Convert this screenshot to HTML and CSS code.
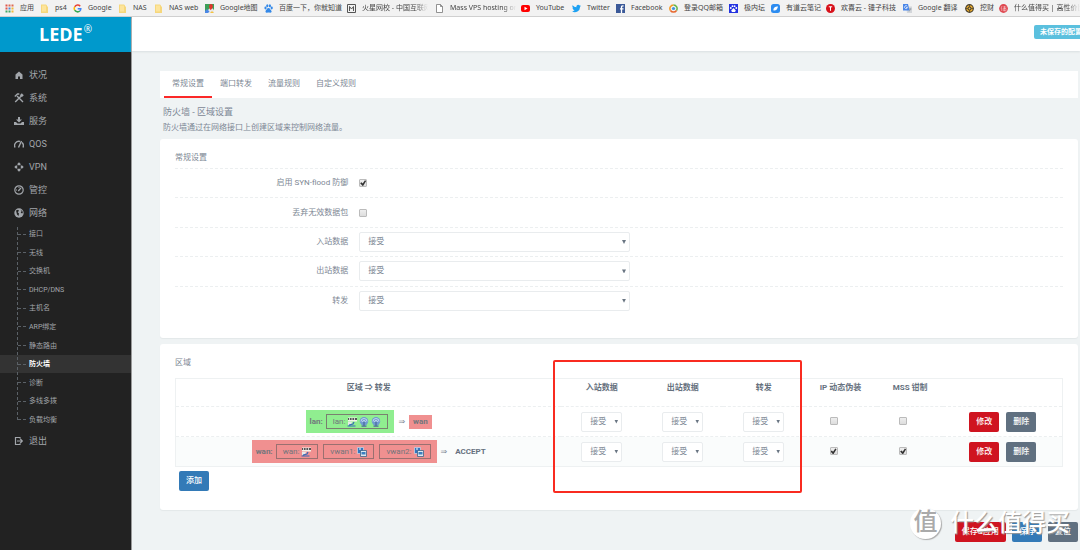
FILE: index.html
```html
<!DOCTYPE html>
<html lang="zh-CN">
<head>
<meta charset="utf-8">
<title>LEDE - 防火墙</title>
<link rel="stylesheet" href="styles.css">
</head>
<body>
<svg width="0" height="0" class="defs" aria-hidden="true">
  <symbol id="i-folder" viewBox="0 0 9 9"><path d="M1 .5h5l1 1v1h1V9H1z" fill="#f6d77c"/><path d="M2 1.5h4v6H2z" fill="#fde49b"/></symbol>
  <symbol id="i-switch" viewBox="0 0 10 10"><path d="M1 .5h9v4H1z" fill="#f3f3ea"/><path d="M1 1h9v2H1z" fill="#555"/><path d="M2.5 1v2M5 1v2M7.500 1v2" stroke="#eee" stroke-width=".8"/><path d="M1 5h4l-1 3H1z" fill="#e8e8e8"/><path d="M2 8l4-1 1-2M.5 9h8" stroke="#3568b8" fill="none" stroke-width="1.200"/></symbol>
  <symbol id="i-wifi" viewBox="0 0 10 10"><circle cx="5" cy="4.200" r="4.200" fill="#6f9bd0"/><path d="M2 4.500a3 3 0 0 1 6 0M3.500 5a1.500 1.500 0 0 1 3 0" stroke="#e7f1fb" fill="none" stroke-width=".7"/><path d="M5 5v4M2.500 9.200h5" stroke="#4a6a98" stroke-width="1.200"/></symbol>
  <symbol id="i-vlan" viewBox="0 0 10 10"><path d="M.5.5h6v6h-6z" fill="#3276bd" stroke="#dbe8f4" stroke-width=".6"/><path d="M3.500 3.500h6v6h-6z" fill="#dce8f0" stroke="#3d6388" stroke-width=".8"/><path d="M4.500 5h4v2.500h-4z" fill="#3c7fbf"/><path d="M2 2h2" stroke="#fff"/></symbol>
</svg>

<nav class="bookmarks" aria-label="书签">
  <a href="#"><svg viewBox="0 0 9 9"><path d="M.5.5h2v2h-2zM.5 3.500h2v2h-2z" fill="#e0564b"/><path d="M3.500.5h2v2h-2zM6.500.5h2v2h-2z" fill="#dd6b52"/><path d="M3.500 3.500h2v2h-2z" fill="#4c8bd8"/><path d="M.5 6.500h2v2h-2zM3.500 6.500h2v2h-2z" fill="#42a866"/><path d="M6.500 3.500h2v2h-2zM6.500 6.500h2v2h-2z" fill="#efbc3c"/></svg><span>应用</span></a>
  <a href="#"><svg><use href="#i-folder"/></svg><span>ps4</span></a>
  <a href="#"><svg viewBox="0 0 9 9" fill="none" stroke-width="1.500"><path d="M7.200 2.200A3.300 3.300 0 0 0 1.700 2.800" stroke="#ea4335"/><path d="M1.700 2.800a3.300 3.300 0 0 0 0 3.400" stroke="#fbbc05"/><path d="M1.700 6.200A3.300 3.300 0 0 0 6.800 7" stroke="#34a853"/><path d="M6.800 7A3.300 3.300 0 0 0 7.800 4.700H4.700" stroke="#4285f4"/></svg><span>Google</span></a>
  <a href="#"><svg><use href="#i-folder"/></svg><span>NAS</span></a>
  <a href="#"><svg><use href="#i-folder"/></svg><span>NAS web</span></a>
  <a href="#"><svg viewBox="0 0 9 9"><path d="M0 0h9v9H0z" fill="#3d9f58"/><path d="M0 9l6-6 3 3v3z" fill="#e8e8e8"/><path d="M0 0h3v4L0 7z" fill="#3d9f58"/><path d="M0 9V7l2-2 2.500 2.500L3 9z" fill="#4b87e6"/><path d="M5 9l2-2 2 2z" fill="#f5c342"/><path d="M5.500 6C3.500 4 3.500 0 6 0s2.500 4-.5 6" fill="#e0382d"/></svg><span>Google地图</span></a>
  <a href="#"><svg viewBox="0 0 9 9" fill="#3388e8"><ellipse cx="1.500" cy="4" rx="1.100" ry="1.400"/><ellipse cx="3.300" cy="1.800" rx="1.100" ry="1.500"/><ellipse cx="5.900" cy="1.800" rx="1.100" ry="1.500"/><ellipse cx="7.700" cy="4" rx="1.100" ry="1.400"/><path d="M4.500 4C3 4 3 5.500 2 6.200S1.500 9 3 8.700s2-.3 3 0 2.500-1 1-2.500S6 4 4.500 4"/></svg><span>百度一下，你就知道</span></a>
  <a href="#"><svg viewBox="0 0 9 9" fill="none" stroke="#555"><path d="M.5.5h8v8h-8z"/><path d="M2.500 7V2.500l2 2.500 2-2.500V7"/></svg><span class="fade">火星网校 - 中国互联网</span></a>
  <a href="#"><svg viewBox="0 0 9 9" fill="#fff" stroke="#777" stroke-width=".8"><path d="M1.500.5h4l2 2v6h-6zM5.500.5v2h2"/></svg><span class="fade">Mass VPS hosting on</span></a>
  <a href="#"><svg viewBox="0 0 9 9"><rect y="1" width="9" height="7" rx="2" fill="#f00"/><path d="M3.500 2.800v3.400l3-1.700z" fill="#fff"/></svg><span>YouTube</span></a>
  <a href="#"><svg viewBox="0 0 24 24" fill="#1da1f2"><path d="M24 4.600a10 10 0 0 1-2.800.8 5 5 0 0 0 2.100-2.700 10 10 0 0 1-3.100 1.200 4.900 4.900 0 0 0-8.400 4.500A14 14 0 0 1 1.700 3.200a4.900 4.900 0 0 0 1.500 6.500 5 5 0 0 1-2.200-.6 4.900 4.900 0 0 0 3.900 4.900 5 5 0 0 1-2.200.1 4.900 4.900 0 0 0 4.600 3.400A10 10 0 0 1 0 19.500 14 14 0 0 0 21.500 7a10 10 0 0 0 2.500-2.400"/></svg><span>Twitter</span></a>
  <a href="#"><svg viewBox="0 0 9 9"><path d="M0 0h9v9H0z" fill="#3b5998"/><path d="M5.500 9V3q0-1.300 2-1M4 4.800h3.500" stroke="#fff" fill="none" stroke-width="1.300"/></svg><span>Facebook</span></a>
  <a href="#"><svg viewBox="0 0 9 9" fill="none" stroke-width="1.500"><path d="M1.500 6.500A3.600 3.600 0 0 1 4.500.9" stroke="#f49a25"/><path d="M4.500.9a3.600 3.600 0 0 1 3 5.600" stroke="#65b64a"/><path d="M7.500 6.500a3.600 3.600 0 0 1-6 0" stroke="#e8662d"/><circle cx="4.500" cy="4.500" r="1.600" fill="#3c94de"/></svg><span>登录QQ邮箱</span></a>
  <a href="#"><svg viewBox="0 0 9 9"><path d="M0 0h9v9H0z" fill="#2433e0"/><g fill="#fff"><circle cx="1.800" cy="4" r=".9"/><circle cx="3.500" cy="2.200" r=".9"/><circle cx="5.600" cy="2.200" r=".9"/><circle cx="7.300" cy="4" r=".9"/><path d="M4.500 4L2.200 6.500 3 8h3l.8-1.500z"/></g></svg><span>极内坛</span></a>
  <a href="#"><svg viewBox="0 0 9 9"><rect width="9" height="9" rx="2.500" fill="#2d8cf0"/><path d="M2.500 6.500C2 4 4 2.500 7 2.500 6.500 5 5 7 2.500 6.500" fill="#fff"/></svg><span>有道云笔记</span></a>
  <a href="#"><svg viewBox="0 0 9 9"><circle cx="4.500" cy="4.500" r="4.500" fill="#d7111b"/><path d="M2.800 2.800h3.400M4.500 2.800v4" stroke="#fff"/></svg><span>欢喜云 - 锤子科技</span></a>
  <a href="#"><svg viewBox="0 0 9 9"><path d="M3 2.500h6V9H4z" fill="#d3d6da"/><path d="M0 0h5l1.500 6.500H0z" fill="#4a86e8"/><path d="M4.300 2.300a1.500 1.500 0 1 0 .2 1.200H3" stroke="#fff" fill="none" stroke-width=".7"/><path d="M6 5h2.500M7.300 4.500Q7.500 6 6 7.500" stroke="#7b8794" fill="none" stroke-width=".6"/></svg><span>Google 翻译</span></a>
  <a href="#"><svg viewBox="0 0 9 9"><circle cx="4.500" cy="4.500" r="4.400" fill="#49402d"/><circle cx="4.500" cy="4.500" r="2.600" fill="none" stroke="#e9aa2d" stroke-width="1.300"/><path d="M4.500 1v7M1 4.500h7" stroke="#49402d" stroke-width=".7"/><circle cx="4.500" cy="4.500" r="1" fill="#f2bb42"/></svg><span>挖财</span></a>
  <a href="#"><svg viewBox="0 0 9 9"><circle cx="4.500" cy="4.500" r="4.400" fill="#df4850"/><path d="M3 2L2 4.500M2.700 4v3M4 3h3.500M5.500 2v5M4.300 4.500H7v2.300H4.300z" stroke="#fff" fill="none" stroke-width=".4"/></svg><span class="fade">什么值得买 | 高性价比</span></a>
</nav>

<div class="app">
  <aside class="sidebar">
    <a class="brand" href="#">LEDE<sup>®</sup></a>
    <nav class="menu" aria-label="主菜单">
      <a href="#"><svg viewBox="0 0 10 10"><path d="M5 1.500L1.500 4.500V9h2.500V6.500h2V9h2.500V4.500z"/></svg>状况</a>
      <a href="#"><svg viewBox="0 0 10 10" fill="none" stroke="currentColor" stroke-width="1.400"><path d="M1.200 9L7 3.200M3 3L9 9M.8 3.500L3.500 1h1.800"/><path d="M8.300.8L6.800 2.200l1 1L9.300 1.800"/></svg>系统</a>
      <a href="#"><svg viewBox="0 0 10 10"><path d="M4 1h2v2.500h2L5 6.500l-3-3h2zM0 6h2l1.500 1.500h3L8 6h2v3H0z"/></svg>服务</a>
      <a href="#"><svg viewBox="0 0 10 10" fill="none" stroke="currentColor" stroke-width="1.400"><path d="M1 8.500a4.300 4.300 0 0 1 5-6M8 3.600a4.300 4.300 0 0 1 1 4.900M4.500 8.500L7.500 2"/></svg>QOS</a>
      <a href="#"><svg viewBox="0 0 10 10"><path d="M5 .3l1.500 1.500v1.400h-3V1.800zM5 9.700l1.500-1.500V6.800h-3v1.400zM.3 5l1.500-1.500h1.400v3H1.800zM9.700 5L8.200 3.500H6.800v3h1.400z"/></svg>VPN</a>
      <a href="#"><svg viewBox="0 0 10 10" fill="none" stroke="currentColor" stroke-width="1.200"><circle cx="5" cy="5" r="4.200"/><path d="M4.300 6L7 2.800M2.300 5H3M5 2.300V3" stroke-width="1.300"/></svg>管控</a>
      <a href="#"><svg viewBox="0 0 10 10"><circle cx="5" cy="5" r="4.700"/><path d="M2 2.500l2-.8 1 1-1.300 1.600L5 5.500 4.500 8 3 6.500zM6.500 1.500l1 2-.8 1.200 1.500.8.8-1.500z" fill="#222"/></svg>网络</a>
      <ul class="submenu">
        <li><a href="#">接口</a></li>
        <li><a href="#">无线</a></li>
        <li><a href="#">交换机</a></li>
        <li><a href="#">DHCP/DNS</a></li>
        <li><a href="#">主机名</a></li>
        <li><a href="#">ARP绑定</a></li>
        <li><a href="#">静态路由</a></li>
        <li class="active"><a href="#" aria-current="page">防火墙</a></li>
        <li><a href="#">诊断</a></li>
        <li><a href="#">多线多拨</a></li>
        <li><a href="#">负载均衡</a></li>
      </ul>
      <a href="#"><svg viewBox="0 0 10 10" fill="none" stroke="currentColor" stroke-width="1.200"><path d="M6 2.500V1.500H1.500v7H6V7.500M3 5h5M6.300 3L8.300 5l-2 2"/></svg>退出</a>
    </nav>
  </aside>

  <div class="page">
    <header class="topbar"><a class="unsaved" href="#">未保存的配置</a></header>
    <main class="content">
      <nav class="tabs" aria-label="防火墙">
        <a class="current" href="#">常规设置</a>
        <a href="#">端口转发</a>
        <a href="#">流量规则</a>
        <a href="#">自定义规则</a>
      </nav>
      <div class="intro">
        <h1>防火墙 - 区域设置</h1>
        <p>防火墙通过在网络接口上创建区域来控制网络流量。</p>
      </div>

      <section class="card general">
        <h2>常规设置</h2>
        <div class="fields">
          <div class="field"><label for="syn">启用 SYN-flood 防御</label><input type="checkbox" id="syn" checked></div>
          <div class="field"><label for="drop">丢弃无效数据包</label><input type="checkbox" id="drop"></div>
          <div class="field"><label for="in">入站数据</label><span class="select"><select id="in"><option>接受</option></select></span></div>
          <div class="field"><label for="out">出站数据</label><span class="select"><select id="out"><option>接受</option></select></span></div>
          <div class="field"><label for="fwd">转发</label><span class="select"><select id="fwd"><option>接受</option></select></span></div>
        </div>
      </section>

      <section class="card zones">
        <h2>区域</h2>
        <table>
          <colgroup><col class="c-zone"><col class="c-policy"><col class="c-policy"><col class="c-policy"><col class="c-masq"><col class="c-mss"><col></colgroup>
          <thead>
            <tr><th>区域 ⇒ 转发</th><th>入站数据</th><th>出站数据</th><th>转发</th><th>IP 动态伪装</th><th>MSS 钳制</th><th></th></tr>
          </thead>
          <tbody>
            <tr>
              <td><div class="route"><span class="zone lan"><b>lan:</b><span class="net">lan: <svg><use href="#i-switch"/></svg><svg><use href="#i-wifi"/></svg><svg><use href="#i-wifi"/></svg></span></span><span class="arrow">⇒</span><b class="dest">wan</b></div></td>
              <td><span class="select small"><select aria-label="lan 入站数据"><option>接受</option></select></span></td>
              <td><span class="select small"><select aria-label="lan 出站数据"><option>接受</option></select></span></td>
              <td><span class="select small"><select aria-label="lan 转发"><option>接受</option></select></span></td>
              <td class="check"><input type="checkbox" aria-label="lan IP 动态伪装"></td>
              <td class="check"><input type="checkbox" aria-label="lan MSS 钳制"></td>
              <td><div class="actions"><button class="btn red">修改</button><button class="btn slate">删除</button></div></td>
            </tr>
            <tr>
              <td><div class="route"><span class="zone wan"><b>wan:</b><span class="net">wan: <svg><use href="#i-switch"/></svg></span><span class="net">vwan1: <svg><use href="#i-vlan"/></svg></span><span class="net">vwan2: <svg><use href="#i-vlan"/></svg></span></span><span class="arrow">⇒</span><b class="accept">ACCEPT</b></div></td>
              <td><span class="select small"><select aria-label="wan 入站数据"><option>接受</option></select></span></td>
              <td><span class="select small"><select aria-label="wan 出站数据"><option>接受</option></select></span></td>
              <td><span class="select small"><select aria-label="wan 转发"><option>接受</option></select></span></td>
              <td class="check"><input type="checkbox" aria-label="wan IP 动态伪装" checked></td>
              <td class="check"><input type="checkbox" aria-label="wan MSS 钳制" checked></td>
              <td><div class="actions"><button class="btn red">修改</button><button class="btn slate">删除</button></div></td>
            </tr>
          </tbody>
        </table>
        <button class="btn blue add">添加</button>
        <div class="highlight"></div>
      </section>

      <div class="footer-actions">
        <button class="btn red">保存&amp;应用</button><button class="btn blue">保存</button><button class="btn slate">复位</button>
        <div class="watermark"><span class="seal">值</span><span>什么值得买</span></div>
      </div>
    </main>
  </div>
</div>
</body>
</html>
```
FILE: styles.css
```css
* { box-sizing: border-box; }

body {
  margin: 0;
  min-height: 100vh;
  display: flex;
  flex-direction: column;
  overflow: hidden;
  background: #eff3f4;
  color: #7d8794;
  font: 8px/12px Roboto, "Noto Sans CJK SC", sans-serif;
}

a { color: inherit; text-decoration: none; }
h1, h2, p, ul { margin: 0; padding: 0; font-weight: 400; }
.defs { position: absolute; }

/* Bookmarks */
.bookmarks {
  display: grid;
  grid-template-columns: 35px 33px 45px 36px 51px 59px 83px 88px 86px 51px 44px 53px 60px 42px 55px 77px 62px 34px 1fr;
  height: 17px;
  padding-left: 5px;
  background: #f2f2f2;
  border-bottom: 1px solid #cfcfcf;
  color: #444;
  font: 7px/16px "Noto Sans", "Noto Sans CJK SC", sans-serif;
}
.bookmarks a { display: flex; align-items: center; gap: 6px; min-width: 0; white-space: nowrap; }
.bookmarks svg { flex: none; width: 9px; height: 9px; }
.bookmarks .fade {
  max-width: 66px;
  overflow: hidden;
  mask-image: linear-gradient(to right, #000 80%, transparent);
}

.app { flex: 1; display: flex; }

/* Sidebar */
.sidebar { flex: none; width: 132px; background: #222; border-right: 1px solid #999; }
.brand {
  display: flex;
  justify-content: center;
  height: 35px;
  background: #09c;
  color: #fff;
  font: 700 18px/34px "Open Sans", "Noto Sans", sans-serif;
}
.brand sup { margin-left: 1px; font-size: 10px; font-weight: 400; line-height: 24px; }
.menu { padding-top: 11px; color: #a2a6ab; font-size: 9px; }
.menu > a { display: flex; align-items: center; gap: 5px; height: 23px; padding-left: 14px; }
.menu svg { width: 10px; height: 10px; fill: currentColor; }
.menu svg[fill="none"] { fill: none; }
.submenu {
  position: relative;
  display: grid;
  grid-auto-rows: 1fr;
  min-height: 204px;
  margin-top: 1px;
  list-style: none;
  font-size: 7px;
}
.submenu::before {
  content: "";
  position: absolute;
  left: 17px;
  top: 2px;
  bottom: 9px;
  border-left: 1px dashed #5b6167;
}
.submenu li { display: flex; align-items: center; gap: 3px; padding-left: 18px; }
.submenu li::before { content: ""; width: 8px; border-top: 1px dashed #5b6167; }
.submenu .active { background: #333; color: #fff; font-weight: 700; }

/* Page */
.page { flex: 1; min-width: 0; display: flex; flex-direction: column; }
.topbar {
  display: flex;
  justify-content: flex-end;
  align-items: center;
  height: 34px;
  background: #fff;
  overflow: hidden;
  box-shadow: 0 1px 2px #d9dfe0;
}
.unsaved {
  flex: none;
  margin: 0 -8px 4px 0;
  padding: 1px 6px;
  border-radius: 2px;
  background: #5bc0de;
  color: #fff;
  font-size: 7px;
  font-weight: 700;
}
.content { padding: 20px 2px 0 28px; }
.tabs { display: flex; padding-left: 4px; background: #fff; line-height: 25px; }
.tabs a { padding: 0 8px; border-bottom: 2px solid transparent; }
.tabs .current { border-color: #fb2828; }
.intro { padding: 6px 3px 4px; }
.intro h1 { font-size: 9px; line-height: 16px; }
.intro p { line-height: 15px; }

.card {
  padding: 12px 15px 0;
  background: #fff;
  border-radius: 3px;
  box-shadow: 0 1px 1px #e3e8e9;
}
.card h2 { font-size: 8px; line-height: 14px; }
.general { margin-bottom: 6px; padding-bottom: 23px; }
.fields { display: grid; grid-auto-rows: 1fr; min-height: 147px; margin-top: 3px; }
.field {
  display: grid;
  grid-template-columns: 19.5% 30.5%;
  column-gap: 11px;
  align-items: center;
  border-top: 1px dashed #eceff0;
}
.field label { text-align: right; }

input[type="checkbox"] {
  appearance: none;
  display: inline-grid;
  place-items: center;
  width: 8px;
  height: 8px;
  margin: 0;
  border: 1px solid #bbb;
  border-radius: 1px;
  background: linear-gradient(#eee, #ddd);
  vertical-align: middle;
}
input[type="checkbox"]:checked::before {
  content: "";
  width: 6px;
  height: 6px;
  background: #333;
  clip-path: polygon(0 50%, 22% 34%, 42% 56%, 80% 0, 100% 14%, 46% 100%);
}

.select { position: relative; display: block; }
.select::after {
  content: "";
  position: absolute;
  right: 4px;
  top: 8px;
  width: 4px;
  height: 4px;
  background: #697582;
  clip-path: polygon(0 0, 100% 0, 50% 100%);
}
select {
  appearance: none;
  display: block;
  width: 100%;
  height: 20px;
  padding: 0 8px;
  border: 1px solid #e9ecee;
  border-radius: 2px;
  background: #fff;
  color: inherit;
  font: inherit;
}
.select.small { width: 41px; margin: 0 auto; }

/* Zone table */
.zones { position: relative; padding-bottom: 19px; }
table {
  width: 100%;
  margin-top: 8px;
  table-layout: fixed;
  border-collapse: collapse;
  border: 1px solid #eef1f2;
}
.c-zone { width: 43.5%; }
.c-policy { width: 9.125%; }
.c-masq { width: 8.2%; }
.c-mss { width: 7.5%; }
th, td { padding: 0; text-align: center; white-space: nowrap; }
th { height: 28px; padding-bottom: 9px; color: #66717e; font-weight: 700; }
td { height: 30px; border-top: 1px dashed #eceff0; }
tbody tr:last-child { background: #fafcfc; }
td.check { padding-right: 14px; }
.route { display: flex; justify-content: center; align-items: center; }
.zone { display: flex; align-items: center; gap: 5px; height: 23px; padding: 0 6px 0 4px; color: #70767c; }
.zone b { margin-right: -2px; }
.lan { background: #90ee90; }
.wan, .dest { background: #f09090; }
.net { display: flex; align-items: center; gap: 2px; height: 15px; padding: 0 6px; border: 1px solid #7a8070; }
.wan .net { border-color: #9a7070; }
.net svg { width: 10px; height: 10px; }
.arrow { margin: 0 4px; font-family: "DejaVu Sans", sans-serif; }
.dest { padding: 1px 4px; color: #70767c; }
.accept { margin-left: 4px; color: #66717e; }
.actions { display: flex; justify-content: center; gap: 7px; }

.btn {
  height: 20px;
  padding: 0 7px;
  border: 0;
  border-radius: 2px;
  color: #fff;
  font: inherit;
  font-weight: 500;
}
.red { background: #cf1420; }
.blue { background: #337ab7; }
.slate { background: #607080; }
.add { display: block; margin: 4px 0 0 4px; }

.highlight {
  position: absolute;
  left: 42.800%;
  top: 16px;
  width: 27.100%;
  height: 133px;
  border: 2px solid #f92b20;
  border-radius: 2px;
  pointer-events: none;
}

.footer-actions {
  position: relative;
  display: flex;
  justify-content: flex-end;
  gap: 6px;
  padding-top: 12px;
}
.watermark {
  position: absolute;
  right: 8px;
  top: -4px;
  display: flex;
  align-items: center;
  gap: 9px;
  color: #fff;
  font-size: 24px;
  font-weight: 500;
  line-height: 34px;
  text-shadow: 1px 1px 1px #999;
  pointer-events: none;
}
.seal {
  width: 31px;
  height: 31px;
  border-radius: 50%;
  background: #fff;
  box-shadow: 1px 1px 1px #aaa;
  color: #aaa;
  line-height: 29px;
  text-align: center;
  text-shadow: none;
}
```
